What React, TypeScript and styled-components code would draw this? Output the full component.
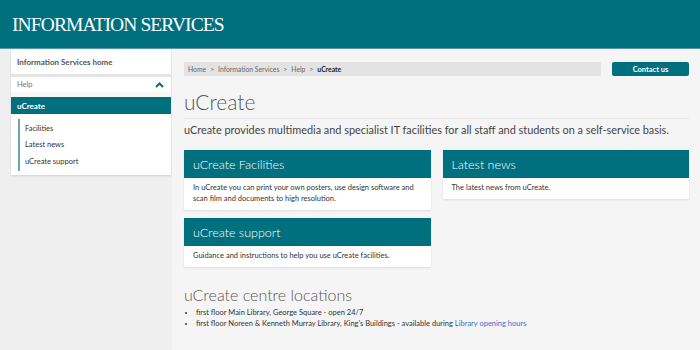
import React from "react";
import styled, { createGlobalStyle } from "styled-components";

const teal = "#00707f";

const GlobalStyle = createGlobalStyle`
  html, body {
    margin: 0;
    padding: 0;
    background: #efefef;
  }
  body {
    font-family: Lato, "Open Sans", sans-serif;
    color: #333;
  }
`;

const Page = styled.div`
  width: 700px;
  height: 350px;
  overflow: hidden;
  background: #efefef;
`;

const Header = styled.header`
  height: 49px;
  background: ${teal};
  display: flex;
  align-items: center;
  padding-left: 12px;
  border-bottom: 1px solid #5c98a2;
  box-sizing: border-box;
`;

const SiteTitle = styled.h1`
  margin: 0;
  color: #fff;
  font-family: "Liberation Serif", serif;
  font-weight: 400;
  font-size: 19.5px;
  letter-spacing: -0.9px;
  padding-top: 2px;
`;

const Body = styled.div`
  display: flex;
  align-items: stretch;
  height: 301px;
`;

const Sidebar = styled.aside`
  width: 172px;
  padding: 1px 1px 0 11px;
  box-sizing: border-box;
`;

const SidePanel = styled.nav`
  background: #f7f7f7;
  box-shadow: 0 1px 2px rgba(0, 0, 0, 0.12);
`;

const HomeLink = styled.a`
  display: flex;
  align-items: center;
  height: 24px;
  padding-left: 6px;
  background: #fff;
  border-bottom: 3px solid #e4e4e4;
  font-size: 8px;
  font-weight: 700;
  color: #555;
  text-decoration: none;
`;

const HelpRow = styled.div`
  display: flex;
  align-items: center;
  justify-content: space-between;
  height: 15px;
  padding: 0 7px 0 6px;
  background: #fff;
  font-size: 7.5px;
  color: #777;
  margin-bottom: 5px;
`;

const Current = styled.div`
  height: 17px;
  display: flex;
  align-items: center;
  padding-left: 6px;
  background: ${teal};
  color: #fff;
  font-size: 8px;
  font-weight: 700;
`;

const SubList = styled.ul`
  list-style: none;
  margin: 0;
  padding: 5px 0 4px 7px;
  background: #fff;
`;

const SubInner = styled.div`
  border-left: 2px solid #6aa7b0;
  padding: 1px 0 1px 5px;
`;

const SubItem = styled.li`
  height: 16.5px;
  display: flex;
  align-items: center;
  font-size: 7.5px;
  color: #333;
`;

const Main = styled.main`
  flex: 1;
  background: #f5f5f5;
  padding: 13px 11px 0 12px;
`;

const TopRow = styled.div`
  display: flex;
  gap: 11px;
  height: 14px;
`;

const Breadcrumb = styled.div`
  flex: 1;
  background: #e3e3e3;
  display: flex;
  align-items: center;
  padding-left: 4px;
  font-size: 6.8px;
  color: #666;
  gap: 4px;
  border-radius: 1px;
`;

const Crumb = styled.span<{ $current?: boolean }>`
  color: ${({ $current }) => ($current ? "#222" : "#666")};
  font-weight: ${({ $current }) => ($current ? 700 : 400)};
`;

const ContactButton = styled.button`
  width: 77px;
  height: 14px;
  border: none;
  border-radius: 2px;
  background: ${teal};
  color: #fff;
  font-family: inherit;
  font-weight: 700;
  font-size: 7.5px;
  padding: 0;
`;

const PageTitle = styled.h2`
  margin: 14px 0 0;
  font-size: 21px;
  font-weight: 300;
  color: #555;
  line-height: 24px;
  padding-bottom: 4px;
  border-bottom: 1px solid #e6e6e6;
`;

const Intro = styled.p`
  margin: 4px 0 0;
  font-size: 10.9px;
  color: #444;
  line-height: 14px;
  white-space: nowrap;
`;

const CardGrid = styled.div`
  display: grid;
  grid-template-columns: 1fr 1fr;
  column-gap: 12px;
  margin-top: 13px;
  align-items: start;
`;

const CardColumn = styled.div`
  display: flex;
  flex-direction: column;
  gap: 8px;
`;

const Card = styled.section`
  background: #fff;
  box-shadow: 0 1px 2px rgba(0, 0, 0, 0.1);
`;

const CardHead = styled.h3`
  margin: 0;
  height: 28px;
  display: flex;
  align-items: center;
  padding-left: 9px;
  background: ${teal};
  color: #fff;
  font-size: 12.5px;
  font-weight: 300;
`;

const CardBody = styled.p`
  margin: 0;
  padding: 4px 9px 6px;
  font-size: 7.5px;
  line-height: 11px;
  color: #333;
`;

const SectionTitle = styled.h2`
  margin: 18px 0 0;
  font-size: 16px;
  font-weight: 300;
  color: #555;
  line-height: 20px;
`;

const Bullets = styled.ul`
  margin: 2px 0 0;
  padding-left: 12px;
  font-size: 7.5px;
  line-height: 11px;
  color: #333;
`;

const Bullet = styled.li`
  padding-left: 0;
`;

const TextLink = styled.a`
  color: #3a6fc4;
  text-decoration: none;
`;

const ChevronUp = () => (
  <svg width="9" height="6" viewBox="0 0 9 6">
    <path d="M1 5 L4.5 1.5 L8 5" fill="none" stroke={teal} strokeWidth="2" />
  </svg>
);

export default function App() {
  return (
    <Page>
      <GlobalStyle />
      <Header>
        <SiteTitle>INFORMATION SERVICES</SiteTitle>
      </Header>
      <Body>
        <Sidebar>
          <SidePanel>
            <HomeLink href="#">Information Services home</HomeLink>
            <HelpRow>
              Help
              <ChevronUp />
            </HelpRow>
            <Current>uCreate</Current>
            <SubList>
              <SubInner>
                <SubItem>Facilities</SubItem>
                <SubItem>Latest news</SubItem>
                <SubItem>uCreate support</SubItem>
              </SubInner>
            </SubList>
          </SidePanel>
        </Sidebar>
        <Main>
          <TopRow>
            <Breadcrumb>
              <Crumb>Home</Crumb>
              <Crumb>&gt;</Crumb>
              <Crumb>Information Services</Crumb>
              <Crumb>&gt;</Crumb>
              <Crumb>Help</Crumb>
              <Crumb>&gt;</Crumb>
              <Crumb $current>uCreate</Crumb>
            </Breadcrumb>
            <ContactButton>Contact us</ContactButton>
          </TopRow>
          <PageTitle>uCreate</PageTitle>
          <Intro>
            uCreate provides multimedia and specialist IT facilities for all staff and students on a
            self-service basis.
          </Intro>
          <CardGrid>
            <CardColumn>
              <Card>
                <CardHead>uCreate Facilities</CardHead>
                <CardBody>
                  In uCreate you can print your own posters, use design software and scan film and
                  documents to high resolution.
                </CardBody>
              </Card>
              <Card>
                <CardHead>uCreate support</CardHead>
                <CardBody>Guidance and instructions to help you use uCreate facilities.</CardBody>
              </Card>
            </CardColumn>
            <CardColumn>
              <Card>
                <CardHead>Latest news</CardHead>
                <CardBody>The latest news from uCreate.</CardBody>
              </Card>
            </CardColumn>
          </CardGrid>
          <SectionTitle>uCreate centre locations</SectionTitle>
          <Bullets>
            <Bullet>first floor Main Library, George Square - open 24/7</Bullet>
            <Bullet>
              first floor Noreen &amp; Kenneth Murray Library, King's Buildings - available during{" "}
              <TextLink href="#">Library opening hours</TextLink>
            </Bullet>
          </Bullets>
        </Main>
      </Body>
    </Page>
  );
}
